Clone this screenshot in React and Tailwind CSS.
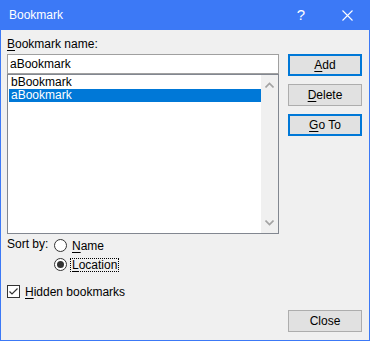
const U = ({ children }) => <span className="underline underline-offset-2">{children}</span>;

const Button = ({ children, primary, className = '' }) => (
  <button
    className={
      'h-[22px] w-[74px] bg-[#e1e1e1] text-[12px] text-black ' +
      (primary ? 'border-2 border-[#0078d7] ' : 'border border-[#adadad] ') +
      className
    }
  >
    {children}
  </button>
);

const Chevron = ({ up }) => (
  <svg width="9" height="6" viewBox="0 0 9 6" className="block">
    <path
      d={up ? 'M0.5 5.5 L4.5 1.5 L8.5 5.5' : 'M0.5 0.5 L4.5 4.5 L8.5 0.5'}
      fill="none"
      stroke="#a3a3a3"
      strokeWidth="1.6"
    />
  </svg>
);

const Radio = ({ checked }) => (
  <span className="w-[13px] h-[13px] rounded-full border border-[#333] bg-white flex items-center justify-center shrink-0">
    {checked && <span className="w-[7px] h-[7px] rounded-full bg-[#333]" />}
  </span>
);

export default function App() {
  return (
    <div
      className="w-[370px] h-[341px] flex flex-col bg-[#f0f0f0] border-x border-b border-[#3c79f6] text-[12px] text-black"
      style={{ fontFamily: '"Liberation Sans", Arial, sans-serif' }}
    >
      {/* Title bar */}
      <div className="h-[30px] bg-[#3c79f6] flex items-center text-white shrink-0 -mx-px">
        <span className="ml-[9px] text-[12px]">Bookmark</span>
        <span className="ml-auto w-[46px] text-center text-[15px]">?</span>
        <span className="w-[46px] flex justify-center">
          <svg width="11" height="11" viewBox="0 0 11 11">
            <path d="M0.5 0.5 L10.5 10.5 M10.5 0.5 L0.5 10.5" stroke="white" strokeWidth="1.1" />
          </svg>
        </span>
      </div>

      <div className="flex flex-1">
        {/* Left column */}
        <div className="ml-[6px] w-[272px] flex flex-col">
          <div className="mt-[6px] h-[16px] leading-[16px]">
            <U>B</U>ookmark name:
          </div>
          <div className="mt-[2px] h-[20px] border border-[#a0a0a0] bg-white pl-[2px] leading-[18px]">
            aBookmark
          </div>
          <div className="h-[160px] border border-[#828790] bg-white flex">
            <div className="flex-1 pt-[1px] pl-[1px]">
              <div className="h-[13px] leading-[13px] pl-[2px]">bBookmark</div>
              <div className="h-[13px] leading-[13px] pl-[2px] bg-[#0078d7] text-white">aBookmark</div>
            </div>
            <div className="w-[17px] bg-[#f0f0f0] flex flex-col items-center justify-between py-[7px]">
              <Chevron up />
              <Chevron />
            </div>
          </div>

          <div className="mt-[5px] flex">
            <span className="w-[47px] leading-[13px] -mt-[1px]">Sort by:</span>
            <div className="flex flex-col gap-[6px]">
              <div className="flex items-center h-[13px]">
                <Radio />
                <span className="ml-[5px]">
                  <U>N</U>ame
                </span>
              </div>
              <div className="flex items-center h-[13px]">
                <Radio checked />
                <span className="ml-[3px] px-[1px] border border-dotted border-black leading-[12px]">
                  <U>L</U>ocation
                </span>
              </div>
            </div>
          </div>

          <div className="mt-[14px] flex items-center h-[13px]">
            <span className="w-[13px] h-[13px] border border-[#333] bg-white flex items-center justify-center">
              <svg width="11" height="11" viewBox="0 0 11 11">
                <path d="M1.5 5.5 L4 8 L9.5 2.5" fill="none" stroke="#333" strokeWidth="1.2" />
              </svg>
            </span>
            <span className="ml-[5px]">
              <U>H</U>idden bookmarks
            </span>
          </div>
        </div>

        {/* Right column */}
        <div className="ml-[9px] w-[74px] flex flex-col pb-[8px]">
          <Button primary className="mt-[24px]">
            <U>A</U>dd
          </Button>
          <Button className="mt-[8px]">
            <U>D</U>elete
          </Button>
          <Button primary className="mt-[8px]">
            <U>G</U>o To
          </Button>
          <Button className="mt-auto">Close</Button>
        </div>
      </div>
    </div>
  );
}
